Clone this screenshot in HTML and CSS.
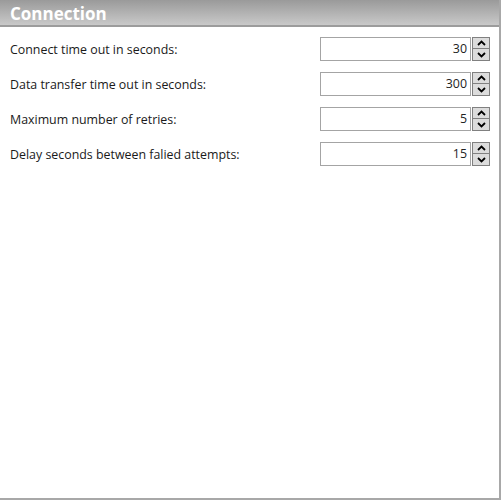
FILE: index.html
```html
<!DOCTYPE html>
<html>
<head>
  <meta charset="UTF-8">
  <title>Connection</title>
  <link rel="stylesheet" href="styles.css">
</head>
<body>
  <div class="panel">
    <div class="panel-head">Connection</div>

    <div class="rows">
      <div class="row">
        <span class="label">Connect time out in seconds:</span>
        <div class="spin">
          <div class="spin-val">30</div>
          <div class="spin-btns">
            <div class="spin-btn"><svg width="9" height="6" viewBox="0 0 9 6"><path d="M1 5 L4.5 1.5 L8 5" fill="none" stroke="#000" stroke-width="1.8"/></svg></div>
            <div class="spin-btn"><svg width="9" height="6" viewBox="0 0 9 6"><path d="M1 1 L4.5 4.5 L8 1" fill="none" stroke="#000" stroke-width="1.8"/></svg></div>
          </div>
        </div>
      </div>
      <div class="row">
        <span class="label">Data transfer time out in seconds:</span>
        <div class="spin">
          <div class="spin-val">300</div>
          <div class="spin-btns">
            <div class="spin-btn"><svg width="9" height="6" viewBox="0 0 9 6"><path d="M1 5 L4.5 1.5 L8 5" fill="none" stroke="#000" stroke-width="1.8"/></svg></div>
            <div class="spin-btn"><svg width="9" height="6" viewBox="0 0 9 6"><path d="M1 1 L4.5 4.5 L8 1" fill="none" stroke="#000" stroke-width="1.8"/></svg></div>
          </div>
        </div>
      </div>
      <div class="row">
        <span class="label">Maximum number of retries:</span>
        <div class="spin">
          <div class="spin-val">5</div>
          <div class="spin-btns">
            <div class="spin-btn"><svg width="9" height="6" viewBox="0 0 9 6"><path d="M1 5 L4.5 1.5 L8 5" fill="none" stroke="#000" stroke-width="1.8"/></svg></div>
            <div class="spin-btn"><svg width="9" height="6" viewBox="0 0 9 6"><path d="M1 1 L4.5 4.5 L8 1" fill="none" stroke="#000" stroke-width="1.8"/></svg></div>
          </div>
        </div>
      </div>
      <div class="row">
        <span class="label">Delay seconds between falied attempts:</span>
        <div class="spin">
          <div class="spin-val">15</div>
          <div class="spin-btns">
            <div class="spin-btn"><svg width="9" height="6" viewBox="0 0 9 6"><path d="M1 5 L4.5 1.5 L8 5" fill="none" stroke="#000" stroke-width="1.8"/></svg></div>
            <div class="spin-btn"><svg width="9" height="6" viewBox="0 0 9 6"><path d="M1 1 L4.5 4.5 L8 1" fill="none" stroke="#000" stroke-width="1.8"/></svg></div>
          </div>
        </div>
      </div>
    </div>
  </div>
</body>
</html>
```

FILE: styles.css
```css
body { margin: 0; font-family: 'Open Sans', 'Noto Sans', Arial, sans-serif; color: #1a1a1a; background: #fff; }

.panel {
  width: 499px;
  height: 498px;
  border-right: 2px solid #a8a8a8;
  border-bottom: 2px solid #a8a8a8;
  background: #fff;
}
.panel-head {
  height: 25px;
  line-height: 27px;
  padding-left: 10px;
  background: linear-gradient(#9a9a9a, #c9c9c9);
  border-bottom: 2px solid #9c9c9c;
  color: #fff;
  font-size: 17px;
  font-weight: bold;
}

/* --- ROWS --- */
.rows { padding: 10px 9px 0 10px; display: flex; flex-direction: column; gap: 11px; }
.row { display: flex; align-items: center; justify-content: space-between; height: 24px; }
.label { font-size: 12.4px; }

.spin { display: flex; align-items: center; }
.spin-val {
  width: 146px;
  height: 22px;
  line-height: 22px;
  border: 1px solid #a4a4a4;
  text-align: right;
  padding-right: 3px;
  font-size: 12.4px;
  color: #222;
}
.spin-btns { display: flex; flex-direction: column; margin-left: 1px; }
.spin-btn {
  width: 16px;
  height: 10px;
  border: 1px solid #808080;
  background: #dcdcdc;
  display: flex;
  align-items: center;
  justify-content: center;
}
.spin-btn + .spin-btn { border-top: none; height: 11px; }
.spin-btn svg { display: block; }
```
